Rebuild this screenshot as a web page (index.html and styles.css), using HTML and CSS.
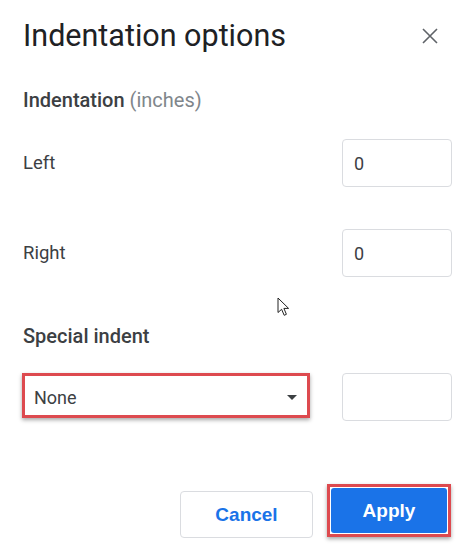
FILE: index.html
```html
<!DOCTYPE html>
<html>
<head>
<meta charset="utf-8">
<link rel="stylesheet" href="styles.css">
</head>
<body>
<div class="dialog">
  <div class="header">
    <h1 class="title">Indentation options</h1>
    <button class="close" aria-label="Close">
      <svg width="16" height="16" viewBox="0 0 16 16"><path d="M1 1 L15 15 M15 1 L1 15" stroke="#5f6368" stroke-width="1.6" fill="none"/></svg>
    </button>
  </div>
  <div class="subhead">Indentation <span class="unit">(inches)</span></div>
  <div class="row row-left">
    <span class="label">Left</span>
    <div class="field">0</div>
  </div>
  <div class="row row-right">
    <span class="label">Right</span>
    <div class="field">0</div>
  </div>
  <div class="subhead special">Special indent</div>
  <div class="row select-row">
    <div class="select">
      <span>None</span>
      <svg class="caret" width="10" height="5" viewBox="0 0 10 5"><path d="M0 0 L10 0 L5 5 Z" fill="#3c4043"/></svg>
    </div>
    <div class="field empty"></div>
  </div>
  <div class="buttons">
    <button class="btn cancel">Cancel</button>
    <div class="apply-wrap"><button class="btn apply">Apply</button></div>
  </div>
  <svg class="cursor" width="14" height="20" viewBox="0 0 14 20"><path d="M1 1 L1 15.5 L4.6 12.3 L7.2 18.3 L9.4 17.3 L6.9 11.4 L11.6 11.4 Z" fill="#fff" stroke="#222" stroke-width="1" stroke-linejoin="round"/></svg>
</div>
</body>
</html>
```

FILE: styles.css
```css
html, body {
  margin: 0;
  padding: 0;
  background: #fff;
}
.dialog {
  position: relative;
  width: 465px;
  height: 555px;
  box-sizing: border-box;
  padding: 18px 13px 0 23px;
  font-family: Roboto, "Liberation Sans", sans-serif;
  color: #3c4043;
}
.header {
  display: flex;
  justify-content: space-between;
  align-items: center;
  height: 36px;
}
.title {
  margin: 0;
  font-size: 30.5px;
  line-height: 36px;
  font-weight: 400;
  color: #202124;
  letter-spacing: 0;
}
.close {
  width: 24px;
  height: 24px;
  margin-right: 10px;
  padding: 0;
  border: none;
  background: none;
  display: flex;
  align-items: center;
  justify-content: center;
}
.subhead {
  margin-top: 34px;
  font-size: 20px;
  line-height: 24px;
  font-weight: 500;
  color: #3c4043;
}
.unit {
  font-weight: 400;
  color: #80868b;
}
.special {
  margin-top: 47px;
}
.row {
  display: flex;
  justify-content: space-between;
  align-items: center;
}
.row-left {
  margin-top: 27px;
}
.row-right {
  margin-top: 42px;
}
.label {
  font-size: 18.5px;
  line-height: 22px;
  color: #3c4043;
}
.field {
  width: 110px;
  height: 48px;
  box-sizing: border-box;
  border: 1px solid #dadce0;
  border-radius: 4px;
  padding-left: 11px;
  display: flex;
  align-items: center;
  font-size: 18px;
  color: #3c4043;
}
.select-row {
  margin-top: 25px;
  align-items: flex-start;
  margin-left: -1px;
}
.select {
  width: 288px;
  height: 45px;
  box-sizing: border-box;
  border: 3px solid #dd4a4f;
  box-shadow: 0 2px 4px rgba(0, 0, 0, 0.35);
  display: flex;
  align-items: center;
  justify-content: space-between;
  padding: 3px 10px 0 9px;
  font-size: 18px;
  color: #3c4043;
  background: #fff;
}
.caret {
  margin-top: 0;
}
.buttons {
  margin-top: 63px;
  display: flex;
  justify-content: flex-end;
  align-items: flex-end;
  gap: 14px;
  margin-right: 1px;
}
.btn {
  font-family: "Liberation Sans", Arial, sans-serif;
  font-size: 19px;
  font-weight: 700;
  cursor: pointer;
}
.cancel {
  width: 133px;
  height: 47px;
  margin-bottom: -1px;
  border: 1px solid #dadce0;
  border-radius: 4px;
  background: #fff;
  color: #1a73e8;
}
.apply-wrap {
  border: 3px solid #dd4a4f;
  box-shadow: 0 2px 4px rgba(0, 0, 0, 0.35);
  padding: 1px;
  background: #fff;
}
.apply {
  display: block;
  width: 116px;
  height: 45px;
  border: none;
  border-radius: 3px;
  background: #1a73e8;
  color: #fff;
}
.cursor {
  position: absolute;
  left: 277px;
  top: 297px;
}
```
